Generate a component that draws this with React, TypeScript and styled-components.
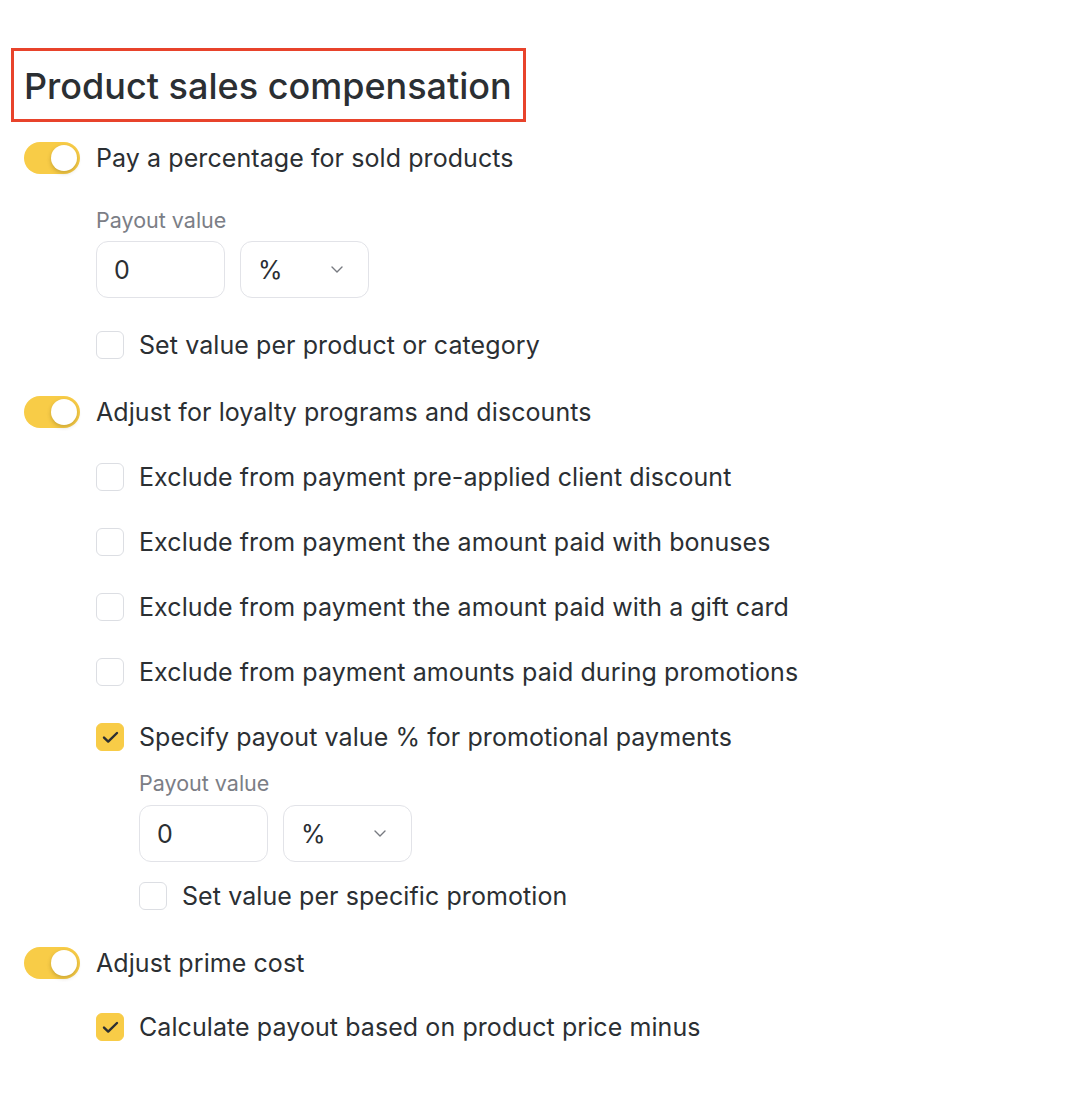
import React from "react";
import styled, { createGlobalStyle } from "styled-components";

const Global = createGlobalStyle`
  html, body { margin: 0; padding: 0; background: #ffffff; }
  body { font-family: Inter, "Noto Sans", "Liberation Sans", sans-serif; color: #2b2f33; -webkit-font-smoothing: antialiased; }
`;

const Page = styled.div`
  display: flex;
  flex-direction: column;
  padding: 48px 0 60px 24px;
`;

const TitleBox = styled.div`
  align-self: flex-start;
  margin-left: -13px;
  margin-bottom: 20px;
  border: 3px solid #e8432b;
  padding: 2px 11px 0 10px;
  height: 66px;
  box-sizing: content-box;
  display: flex;
  align-items: center;
`;

const Title = styled.h1`
  margin: 0;
  font-size: 36px;
  font-weight: 500;
  color: #2b2f33;
  line-height: 1;
`;

const Sections = styled.div`
  display: flex;
  flex-direction: column;
  gap: 37px;
`;

const Section = styled.div`
  display: flex;
  flex-direction: column;
`;

const ToggleRow = styled.label`
  display: flex;
  align-items: center;
  gap: 16px;
  height: 32px;
`;

const Track = styled.span<{ $on: boolean }>`
  position: relative;
  width: 56px;
  height: 32px;
  border-radius: 16px;
  background: ${(p) => (p.$on ? "#f8cc47" : "#e1e3e8")};
  flex-shrink: 0;
`;

const Knob = styled.span<{ $on: boolean }>`
  position: absolute;
  top: 3px;
  left: ${(p) => (p.$on ? "27px" : "3px")};
  width: 26px;
  height: 26px;
  border-radius: 50%;
  background: #ffffff;
  box-shadow: 0 2px 4px rgba(80, 60, 0, 0.28);
`;

const RowText = styled.span`
  font-size: 25px;
  letter-spacing: 0.08px;
  line-height: 30px;
  color: #2b2f33;
  white-space: nowrap;
`;

const Sub = styled.div<{ $top: number }>`
  display: flex;
  flex-direction: column;
  padding-left: 72px;
  margin-top: ${(p) => p.$top}px;
`;

const CheckList = styled.div`
  display: flex;
  flex-direction: column;
  gap: 37px;
`;

const CheckRow = styled.label`
  display: flex;
  align-items: center;
  gap: 15px;
  height: 28px;
`;

const Box = styled.span<{ $checked: boolean }>`
  width: 28px;
  height: 28px;
  box-sizing: border-box;
  border-radius: 6px;
  border: 1px solid ${(p) => (p.$checked ? "#f8cc47" : "#dcdee3")};
  background: ${(p) => (p.$checked ? "#f8cc47" : "#ffffff")};
  display: flex;
  align-items: center;
  justify-content: center;
  flex-shrink: 0;
`;

const Field = styled.div<{ $gap: number; $after: number }>`
  display: flex;
  flex-direction: column;
  gap: ${(p) => p.$gap}px;
  margin-bottom: ${(p) => p.$after}px;
`;

const FieldLabel = styled.span`
  font-size: 21.5px;
  line-height: 24px;
  color: #7b7e86;
`;

const Controls = styled.div`
  display: flex;
  gap: 15px;
`;

const Control = styled.div`
  box-sizing: border-box;
  width: 129px;
  height: 57px;
  border: 1px solid #e2e3e8;
  border-radius: 12px;
  display: flex;
  align-items: center;
  justify-content: space-between;
  padding: 0 25px 0 17px;
  font-size: 25px;
  color: #2b2f33;
`;

const Nested = styled.div`
  display: flex;
  flex-direction: column;
  padding-left: 43px;
  margin-top: 20px;
`;

const Toggle = ({ on, label }: { on: boolean; label: string }) => (
  <ToggleRow>
    <Track $on={on}>
      <Knob $on={on} />
    </Track>
    <RowText>{label}</RowText>
  </ToggleRow>
);

const Check = ({ checked, label }: { checked?: boolean; label: string }) => (
  <CheckRow>
    <Box $checked={!!checked}>
      {checked && (
        <svg width="17" height="13" viewBox="0 0 17 13" fill="none">
          <path d="M2 6.6 L6.2 10.6 L15 2" stroke="#2b2f33" strokeWidth="2.4" strokeLinecap="round" strokeLinejoin="round" />
        </svg>
      )}
    </Box>
    <RowText>{label}</RowText>
  </CheckRow>
);

const Chevron = () => (
  <svg width="12" height="7" viewBox="0 0 12 7" fill="none">
    <path d="M1 1 L6 6 L11 1" stroke="#777a80" strokeWidth="1.4" strokeLinecap="round" strokeLinejoin="round" />
  </svg>
);

const Payout = ({ gap, after }: { gap: number; after: number }) => (
  <Field $gap={gap} $after={after}>
    <FieldLabel>Payout value</FieldLabel>
    <Controls>
      <Control>0</Control>
      <Control>
        <span>%</span>
        <Chevron />
      </Control>
    </Controls>
  </Field>
);

export default function App() {
  return (
    <>
      <Global />
      <Page>
        <TitleBox>
          <Title>Product sales compensation</Title>
        </TitleBox>
        <Sections>
          <Section>
            <Toggle on label="Pay a percentage for sold products" />
            <Sub $top={34}>
              <Payout gap={9} after={33} />
              <Check label="Set value per product or category" />
            </Sub>
          </Section>
          <Section>
            <Toggle on label="Adjust for loyalty programs and discounts" />
            <Sub $top={35}>
              <CheckList>
                <Check label="Exclude from payment pre-applied client discount" />
                <Check label="Exclude from payment the amount paid with bonuses" />
                <Check label="Exclude from payment the amount paid with a gift card" />
                <Check label="Exclude from payment amounts paid during promotions" />
                <Check checked label="Specify payout value % for promotional payments" />
              </CheckList>
              <Nested>
                <Payout gap={10} after={20} />
                <Check label="Set value per specific promotion" />
              </Nested>
            </Sub>
          </Section>
          <Section>
            <Toggle on label="Adjust prime cost" />
            <Sub $top={34}>
              <Check checked label="Calculate payout based on product price minus" />
            </Sub>
          </Section>
        </Sections>
      </Page>
    </>
  );
}
